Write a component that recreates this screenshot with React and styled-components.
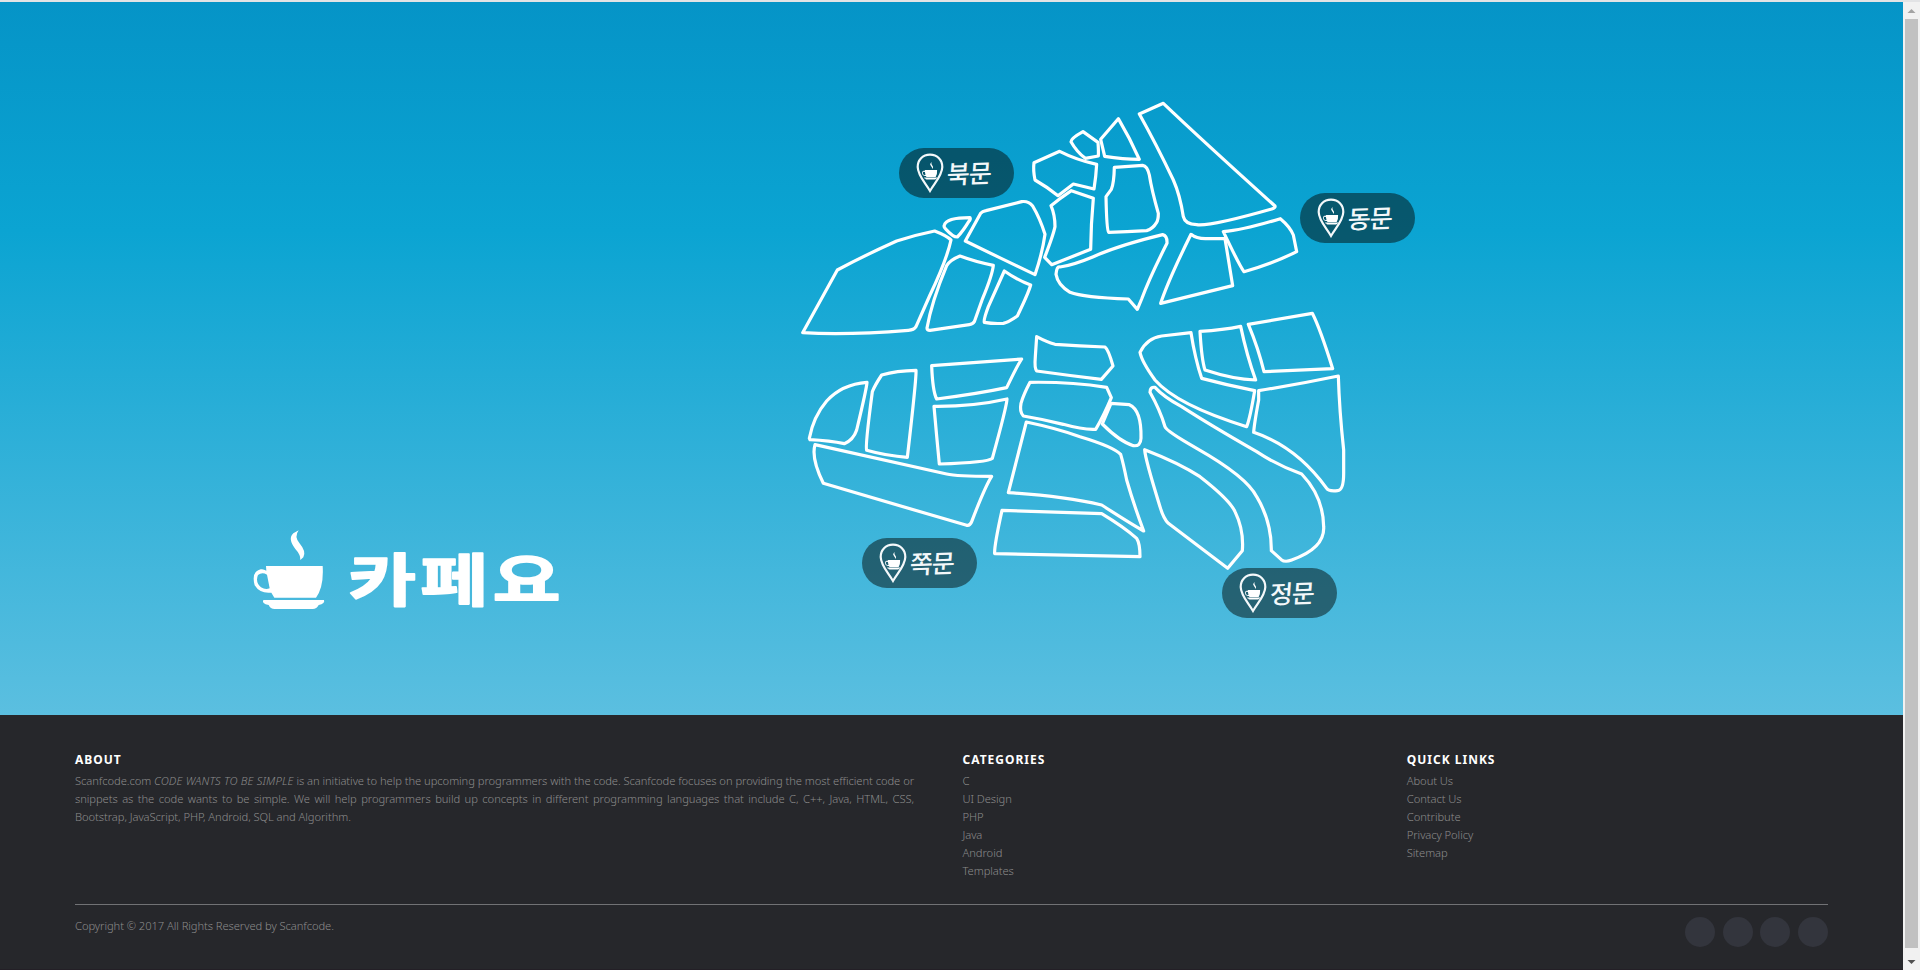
import React from "react";
import styled, { createGlobalStyle } from "styled-components";

const GlobalStyle = createGlobalStyle`
  html, body { margin: 0; padding: 0; height: 970px; overflow: hidden; background: #26272b; }
  * { box-sizing: border-box; }
`;

const Window = styled.div`
  display: grid;
  grid-template-columns: 1903px 17px;
  width: 1920px;
  height: 970px;
  border-top: 2px solid #e2e3e5;
  font-family: "Noto Sans", "Noto Sans CJK KR", sans-serif;
`;

const Page = styled.div`
  display: flex;
  flex-direction: column;
  min-width: 0;
`;

const Hero = styled.main`
  display: flex;
  align-items: flex-start;
  height: 713px;
  background: linear-gradient(180deg, #0594c7 0%, #0ba4d2 32%, #5bbfe0 100%);
`;

const Brand = styled.h1`
  width: 780px;
  margin: 0;
  padding: 526px 0 0 252px;
`;

const Logo = styled.svg`
  display: block;
  width: 336px;
  height: 104px;
  overflow: visible;
`;

const LogoName = styled.text`
  font-family: "Noto Sans CJK KR", sans-serif;
  font-size: 170px;
  font-weight: 700;
  fill: #fff;
  stroke: #fff;
  stroke-width: 5;
  stroke-linejoin: round;
`;

const CampusMap = styled.section`
  position: relative;
  width: 660px;
  height: 560px;
  margin-top: 78px;
`;

const Blocks = styled.svg`
  display: block;
  width: 660px;
  height: 560px;
  fill: none;
  stroke: #fff;
  stroke-width: 9.6;
  stroke-linejoin: round;
`;

const Gate = styled.a`
  position: absolute;
  left: ${(p) => p.$x}px;
  top: ${(p) => p.$y}px;
  display: flex;
  align-items: center;
  gap: 3px;
  width: 115px;
  height: 50px;
  padding-left: 17px;
  border-radius: 25px;
  background: rgba(3, 11, 10, 0.5);
  color: #f4f8fa;
`;

const GatePin = styled.svg`
  width: 28px;
  height: 40px;
  flex: none;
`;

const GateName = styled.span`
  margin-top: -3px;
  font-family: "Noto Sans CJK KR", sans-serif;
  font-size: 25px;
  font-weight: 500;
  line-height: 50px;
  letter-spacing: -1px;
  transform: skewY(-2deg) skewX(-4deg);
  white-space: nowrap;
`;

const Footer = styled.footer`
  flex: 1;
  padding: 36px 75px 0;
  border-bottom: 1px solid #231f26;
  background: #26272b;
  color: #8c8c8c;
  font-size: 11.2px;
  font-weight: 300;
  line-height: 18px;
  letter-spacing: -0.065px;
`;

const Columns = styled.div`
  display: grid;
  grid-template-columns: 887.5px 444.25px 1fr;
  height: 153px;
`;

const Heading = styled.h6`
  margin: 0 0 4px;
  font-size: 12px;
  font-weight: 700;
  line-height: 17px;
  letter-spacing: 1px;
  text-transform: uppercase;
  color: #fff;
`;

const About = styled.p`
  width: 839px;
  margin: 0;
  text-align: justify;
`;

const Motto = styled.i`
  letter-spacing: 0.16px;
`;

const Links = styled.ul`
  margin: 0;
  padding: 0;
  list-style: none;
`;

const Bottom = styled.div`
  display: flex;
  justify-content: space-between;
  border-top: 1px solid #717275;
  padding-top: 12px;
`;

const Copyright = styled.p`
  margin: 0;
`;

const Socials = styled.div`
  display: flex;
  gap: 7.6px;
`;

const Social = styled.a`
  width: 30px;
  height: 30px;
  border-radius: 50%;
  background: #33353d;
`;

const Scrollbar = styled.div`
  display: flex;
  flex-direction: column;
  align-items: center;
  background: #f1f1f1;
`;

const Thumb = styled.div`
  width: 13px;
  height: 929px;
  margin-bottom: 4px;
  background: #c1c1c1;
`;

const ArrowBox = styled.svg`
  width: 17px;
  height: 17px;
  fill: ${(p) => p.$color};
`;

const CUP_STEAM = "M176 61Q162 80 178 99Q200 125 190 142L181 150Q182 134 166 117Q142 86 160 70Z";
const CUP_BODY = "M78 168H248Q252 230 228 263H103L94 248Q60 252 44 226Q33 185 62 178Q70 176 79 182ZM81 194Q66 185 54 195Q45 216 63 232Q76 240 89 235Z";
const CUP_SAUCER = "M70 270H252Q256 281 236 285Q230 297 218 297H104Q91 297 86 285Q64 281 70 270Z";

const Cup = () => (
  <g fill="#fff" stroke="none" fillRule="evenodd">
    <path d={CUP_STEAM} />
    <path d={CUP_BODY} />
    <path d={CUP_SAUCER} />
  </g>
);

const BLOCK_GROUPS = [
  {
    origin: [780, 180],
    paths: [
      "M68 458L172 270Q250 228 350 183Q405 165 464 153Q500 167 513 180Q500 240 450 345L408 440Q402 450 385 451Q200 466 68 458Z",
      "M493 135Q500 113 570 113Q573 118 566 125Q548 155 532 171Q520 172 498 148Q490 140 493 135Z",
      "M556 183L602 100Q607 94 618 92L725 65Q745 62 758 78Q780 115 795 163Q787 220 765 284L665 236Z",
      "M441 444Q455 365 500 257Q510 240 540 228Q585 245 640 256Q637 285 608 355L583 425Q578 433 568 434L450 451Q441 451 441 444Z",
      "M673 273Q715 302 752 315Q745 340 712 408Q685 427 670 430Q640 432 613 427Q610 420 625 380Z",
    ],
  },
  {
    origin: [1010, 90],
    paths: [
      "M388 72L460 40Q570 145 795 348Q797 353 785 357Q600 410 560 404Q525 403 520 380Q510 315 490 270Q440 165 388 72Z",
      "M325 86Q360 145 388 208Q340 208 284 199L272 148Z",
      "M219 125L264 157Q266 185 265 198L226 205Q200 185 183 155Q183 145 219 125Z",
      "M149 184Q200 210 260 223Q258 260 252 297L190 282L144 317Q110 290 75 270Q69 240 72 218Z",
      "M184 302L250 325Q243 400 242 478L125 524L104 502Q130 435 135 410Q135 375 123 347Q150 325 184 302Z",
      "M313 232L398 226Q412 228 418 255Q425 300 445 370Q445 390 440 397Q428 417 410 422Q350 425 296 427Q290 420 288 320L304 298Q312 280 313 232Z",
      "M150 531Q140 527 138 553Q143 585 180 607Q220 623 355 627L382 658L395 627Q420 560 471 460Q472 437 458 434Q330 465 250 500Q190 525 150 531Z",
      "M543 433Q560 447 590 446L645 446L668 587L452 640Q475 570 543 433Z",
      "M640 425Q700 420 811 386Q840 410 850 435L860 485Q790 520 702 545Q690 530 640 425Z",
    ],
  },
  {
    origin: [790, 320],
    paths: [
      "M740 50Q770 66 795 73Q870 78 945 81Q955 88 969 138L934 178Q840 167 740 153Q733 145 736 110Z",
      "M720 187Q840 185 950 202L964 233Q940 290 917 328Q880 330 820 313Q760 298 700 288Q688 275 693 250Q700 225 720 187Z",
      "M425 137L695 117Q680 140 650 203Q560 222 440 237Q428 215 425 137Z",
      "M432 259Q550 260 651 237Q650 260 607 415Q595 427 448 432Q440 350 432 259Z",
      "M275 165Q320 152 378 151Q380 170 352 412Q290 408 230 391Q225 380 247 215Q255 195 275 165Z",
      "M58 355Q70 290 110 243Q155 193 231 187Q230 205 200 330Q190 360 163 371Q120 362 60 359Z",
      "M75 374L470 462Q500 469 605 469Q585 500 545 605Q540 618 530 616L100 490Q63 415 75 374Z",
      "M709 306Q800 325 870 350Q970 380 992 403Q1000 430 1010 480Q1030 550 1061 633Q1020 610 935 555Q820 528 655 518Z",
      "M636 571L935 581Q1000 620 1040 655Q1050 670 1050 710L614 701Q612 680 636 571Z",
      "M963 250L1018 254Q1055 270 1053 355Q1052 380 1030 377Q990 365 937 312Z",
    ],
  },
  {
    origin: [1110, 300],
    paths: [
      "M243 98L155 108Q110 115 90 157Q95 185 135 240Q200 315 410 380Q420 355 434 272Q350 255 275 235Q255 175 243 98Z",
      "M270 94Q340 90 392 79Q410 165 437 240Q370 238 285 210Q275 180 270 94Z",
      "M415 73L607 40Q630 85 668 206L462 215Q445 145 415 73Z",
      "M446 272Q570 252 685 228Q688 330 701 450V520Q701 571 683 572Q655 575 650 565Q560 440 431 397Q433 370 446 300Z",
      "M135 262Q120 260 120 277Q150 330 165 380Q168 393 260 445Q410 530 440 590Q485 665 484 752L514 779Q525 788 545 780Q645 745 641 680Q640 590 575 522Q500 495 440 455Q300 375 215 320Q160 290 135 262Z",
      "M104 449Q210 490 270 530Q360 600 375 635Q402 690 397 752L353 805L175 670Q160 655 150 620Q105 475 104 449Z",
    ],
  },
];

const GATES = [
  { name: "북문", x: 119, y: 68 },
  { name: "동문", x: 520, y: 113 },
  { name: "쪽문", x: 82, y: 458 },
  { name: "정문", x: 442, y: 488 },
];

const CATEGORIES = ["C", "UI Design", "PHP", "Java", "Android", "Templates"];
const QUICK_LINKS = ["About Us", "Contact Us", "Contribute", "Privacy Policy", "Sitemap"];
const SOCIALS = ["facebook", "twitter", "dribbble", "linkedin"];

const LinkColumn = ({ title, items }) => (
  <div>
    <Heading>{title}</Heading>
    <Links>
      {items.map((item) => (
        <li key={item}>{item}</li>
      ))}
    </Links>
  </div>
);

export default function App() {
  return (
    <Window>
      <GlobalStyle />
      <Page>
        <Hero>
          <Brand>
            <Logo viewBox="36 54 1008 312">
              <Cup />
              <LogoName transform="scale(1.3 1)" x="250 416 583" y="272">
                카페요
              </LogoName>
            </Logo>
          </Brand>
          <CampusMap>
            <Blocks viewBox="780 80 660 560">
              {BLOCK_GROUPS.map(({ origin, paths }) => (
                <g key={origin.join()} transform={`translate(${origin.join(" ")}) scale(0.33333)`}>
                  {paths.map((d) => (
                    <path key={d} d={d} />
                  ))}
                </g>
              ))}
            </Blocks>
            {GATES.map(({ name, x, y }) => (
              <Gate key={name} $x={x} $y={y}>
                <GatePin viewBox="0 0 28 40">
                  <path
                    d="M14 1.700C6.500 1.700 1.700 7 1.700 14C1.700 22 8.500 29 14 38C19.500 29 26.300 22 26.300 14C26.300 7 21.500 1.700 14 1.700Z"
                    fill="none"
                    stroke="#f4f8fa"
                    strokeWidth="2.200"
                  />
                  <g transform="translate(3 4.800) scale(0.073)">
                    <Cup />
                  </g>
                </GatePin>
                <GateName>{name}</GateName>
              </Gate>
            ))}
          </CampusMap>
        </Hero>
        <Footer>
          <Columns>
            <div>
              <Heading>About</Heading>
              <About>
                Scanfcode.com <Motto>CODE WANTS TO BE SIMPLE</Motto> is an initiative to help the
                upcoming programmers with the code. Scanfcode focuses on providing the most efficient
                code or snippets as the code wants to be simple. We will help programmers build up
                concepts in different programming languages that include C, C++, Java, HTML, CSS,
                Bootstrap, JavaScript, PHP, Android, SQL and Algorithm.
              </About>
            </div>
            <LinkColumn title="Categories" items={CATEGORIES} />
            <LinkColumn title="Quick Links" items={QUICK_LINKS} />
          </Columns>
          <Bottom>
            <Copyright>Copyright © 2017 All Rights Reserved by Scanfcode.</Copyright>
            <Socials>
              {SOCIALS.map((name) => (
                <Social key={name} />
              ))}
            </Socials>
          </Bottom>
        </Footer>
      </Page>
      <Scrollbar>
        <ArrowBox viewBox="0 0 17 17" $color="#a3a3a3">
          <path d="M4.500 11L8.500 7L12.500 11Z" />
        </ArrowBox>
        <Thumb />
        <ArrowBox viewBox="0 0 17 17" $color="#505050">
          <path d="M4.500 8L8.500 12L12.500 8Z" />
        </ArrowBox>
      </Scrollbar>
    </Window>
  );
}
